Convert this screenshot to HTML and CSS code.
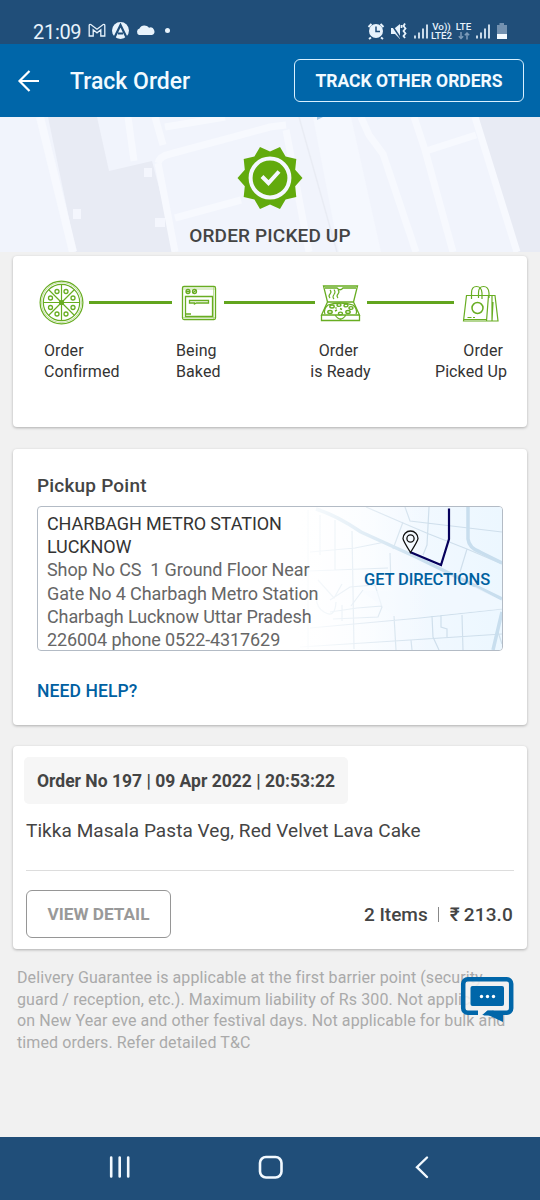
FILE: index.html
```html
<!DOCTYPE html>
<html lang="en">
<head>
<meta charset="utf-8">
<title>Track Order</title>
<link rel="stylesheet" href="styles.css">
</head>
<body>
<div class="screen">
  <div class="status">
    <span class="clock">21:09</span>
    <svg class="status-left" viewBox="86 18 90 24" width="90" height="24" fill="none" stroke="#e8f3fc">
      <path d="M89.200 36V25.500q0-1.500 1.600-1l6.200 4.800 6.200-4.800q1.600-.5 1.600 1V36h-4v-6.200l-3.800 3-3.800-3V36z" stroke-width="1.300"/>
      <circle cx="120.500" cy="30.500" r="8.500" fill="#e8f3fc" stroke="none"/>
      <path d="M114 38.500l6.500-13.500 6.500 13.500M118 33.500h5" stroke="#204e79" stroke-width="2.200"/>
      <path d="M139 35a3.500 3.500 0 0 1 .5-6.500a5.500 5.500 0 0 1 9.500-.7a3.700 3.700 0 0 1 3 7.200z" fill="#e8f3fc" stroke="none"/>
      <circle cx="167.500" cy="30.500" r="2.500" fill="#e8f3fc" stroke="none"/>
    </svg>
    <svg class="status-icons" viewBox="366 20 64 22" width="64" height="22" fill="none" stroke="#e8f3fc">
      <circle cx="376" cy="31" r="7" fill="#e8f3fc" stroke="none"/>
      <path d="M376 26.500V31.500h4" stroke="#204e79" stroke-width="1.500"/>
      <path d="M368.500 27l3-3M383.500 27l-3-3M371 37.500l-2 1.500M381 37.500l2 1.500" stroke-width="2"/>
      <path d="M391 28h4l5-4v15l-5-5h-4z" fill="#e8f3fc" stroke="none"/>
      <path d="M390.500 23l10 15" stroke="#204e79" stroke-width="1.500"/>
      <path d="M401.500 25v3M405 23.500l-1.500 2.500 2 2.500-2 2.500 2 2.500-2 2.500 1.500 2" stroke-width="1.800"/>
      <path d="M415 38.500v-3M419 38.500v-6M423 38.500v-10M427 38.500v-14" stroke-width="1.700"/>
    </svg>
    <span class="volte"><b>Vo))</b><b>LTE2</b></span>
    <span class="lte"><b>LTE</b><svg viewBox="0 0 12 8" width="12" height="8" fill="none" stroke="#7d9bb9" stroke-width="1.500"><path d="M3 0v6.500M.8 4.300L3 6.500l2.200-2.200M9 7.500V1M6.800 3.200L9 1l2.200 2.200"/></svg></span>
    <svg class="status-right" viewBox="474 20 36 22" width="36" height="22" fill="none" stroke="#e8f3fc">
      <path d="M477 38.500v-3M481 38.500v-6M485 38.500v-10M489 38.500v-14" stroke-width="1.700"/>
      <path d="M497 25h2.500v-2h4.500v2h3v14h-10z" fill="#7391b0" stroke="none"/>
      <path d="M497 34h10v5h-10z" fill="#f4faff" stroke="none"/>
    </svg>
  </div>

  <header class="appbar">
    <svg class="back" viewBox="16 68 26 26" width="26" height="26" fill="none" stroke="#fff" stroke-width="2.200"><path d="M39 81H19.500M29.500 71L19.500 81l10 10"/></svg>
    <h1 class="title">Track Order</h1>
    <button class="other">TRACK OTHER ORDERS</button>
  </header>

  <section class="hero">
    <svg class="hero-map" viewBox="0 117 540 135" width="540" height="135" fill="none" stroke="#f7f9fe">
      <path d="M48 117h49l12 54 43-10 24 91H76z" fill="#e8ebf4" stroke="none"/>
      <path d="M478 117h62v135h-22z" fill="#e8ebf4" stroke="none"/>
      <path d="M313 117h38l30 135h-42z" fill="#f5f8fe" stroke="none"/>
      <path d="M40 117l33 135" stroke-width="8"/>
      <path d="M128 117l6 44M155 117l8 28M158 163l17 89M158 163q2-7 12-9l100-27 16-2M175 218l66-18M165 127l60-10" stroke-width="7"/>
      <path d="M286 130l23 122M361 117l8 18 14 19 33 98M414 117l11 33 28 102M426 151l50-16M475 117l42 135" stroke-width="7"/>
      <path d="M299 117l38 135" stroke="#e9ecf4" stroke-width="1.500"/>
      <path d="M144 168h8v9h-8zM73 209h8v10h-8zM155 218h10v9h-10z" fill="#f4f6fd" stroke="none"/>
      <path d="M317 117h6l-6 3z" fill="#a9cae6" stroke="none"/>
    </svg>
    <svg class="seal" viewBox="-33 -33 66 66" width="66" height="66">
      <path fill="#62aa0d" d="M32.500 0L25.200 8.200 26.300 19.100 15.600 21.400 10 30.900 0 26.500-10 30.900-15.600 21.400-26.300 19.100-25.200 8.200-32.500 0-25.200-8.200-26.300-19.100-15.600-21.400-10-30.900 0-26.500 10-30.900 15.600-21.400 26.300-19.100 25.200-8.200z"/>
      <circle r="19.400" fill="none" stroke="#f5f8ff" stroke-width="4"/>
      <path d="M-8-1.500l6.500 6.500L9-6.500" fill="none" stroke="#f5f8ff" stroke-width="4"/>
    </svg>
    <p class="state">ORDER PICKED UP</p>
  </section>

  <section class="card progress">
    <div class="track">
      <svg viewBox="39 280 45 45" width="45" height="45" fill="none" stroke="#68ad22" stroke-width="1.200">
        <circle cx="61.500" cy="302.500" r="21.400"/><circle cx="61.500" cy="302.500" r="18.200"/><circle cx="61.500" cy="302.500" r="20" stroke="#a7d17a" stroke-width=".7"/>
        <path d="M61.500 284v37M43 302.500h37M48.500 289.500l26 26M74.500 289.500l-26 26"/>
        <circle cx="61.500" cy="302.500" r="2" fill="#68ad22"/>
        <g stroke-width="1.300"><circle cx="57" cy="291.500" r="2"/><circle cx="66" cy="291.500" r="2"/><circle cx="50.500" cy="298" r="2"/><circle cx="73" cy="298" r="2"/><circle cx="50.500" cy="307.500" r="2"/><circle cx="73" cy="307.500" r="2"/><circle cx="57" cy="314" r="2"/><circle cx="66" cy="314" r="2"/></g>
      </svg>
      <i class="bar bar-1"></i>
      <svg viewBox="181 284 36 36" width="36" height="36" fill="none" stroke="#68ad22" stroke-width="1.300">
        <rect x="182.500" y="285.500" width="33" height="33" rx="1.500"/><path d="M183 288h32M213.500 286v32M183 316.500h32" stroke="#a7d17a" stroke-width=".7"/>
        <path d="M185.500 295.500h27v20h-27z"/><path d="M189.500 299.500h19v2.500h-12l-2 1v-1h-5zM186 313h5"/>
        <circle cx="188" cy="290.500" r="2"/><circle cx="194.500" cy="290.500" r="2"/><path d="M186 290.500h4M192.500 292l4-3"/>
      </svg>
      <i class="bar bar-2"></i>
      <svg viewBox="320 283 41 38" width="41" height="38" fill="none" stroke="#68ad22" stroke-width="1.300">
        <path d="M323.500 285h34l-4 16h-26zM325 287h12q3 3.500 6 0h13M327.500 301l-6 13h38l-6-13M321.500 314v5.500h38V314M335 314q5.500 8 11 0"/>
        <path d="M325 313q-2-5 3-9 12-4 25 0 5 4 3 9"/>
        <path d="M330 297q-2-2 0-4t0-4M334 298q-2-2 0-4.500t0-5M338 297q-2-2 0-4t0-4" stroke-width="1.100"/>
        <g stroke-width="1.400"><ellipse cx="332" cy="305.500" rx="2.200" ry="1.500"/><ellipse cx="339" cy="304" rx="2" ry="1.400"/><ellipse cx="346" cy="304.500" rx="2" ry="1.400"/><ellipse cx="351" cy="307" rx="2" ry="1.400"/><ellipse cx="330" cy="311" rx="2.200" ry="1.500"/><ellipse cx="348" cy="311" rx="2.200" ry="1.500"/><ellipse cx="340.500" cy="312.500" rx="2" ry="1.400"/><path d="M335 310l2-1M340 307.500l2 1M335.500 306.500l1 1"/></g>
      </svg>
      <i class="bar bar-3"></i>
      <svg viewBox="462 282 38 38" width="38" height="38" fill="none" stroke="#68ad22" stroke-width="1.200">
        <path d="M466.500 293.500h28.500l3 25.500h-34.500zM488.500 293.500l-2 25.500M492 293.500v25.500M493 300l-1 19M464 317.500h22"/>
        <path d="M471.500 297v-6q0-6.500 5-6.500t5.500 6.500v6M478.500 296v-5q0-6.500 5-6.500t5.500 6.500v5"/>
        <circle cx="477.500" cy="306" r="5.500" stroke-width="1.500"/><path d="M467.500 315.500h4M473 315.500h2"/>
      </svg>
    </div>
    <div class="labels">
      <p class="l1"><span>Order</span><br><span>Confirmed</span></p>
      <p class="l2">Being<br>Baked</p>
      <p class="l3"><span class="nudge">Order</span><br>is Ready</p>
      <p class="l4"><span class="inset">Order</span><br>Picked Up</p>
    </div>
  </section>

  <section class="card pickup">
    <h2 class="subhead">Pickup Point</h2>
    <div class="place">
      <svg class="map" viewBox="298 507 204 143" width="204" height="143" fill="none">
        <defs>
          <linearGradient id="sky" x1="0" x2="1"><stop offset="0" stop-color="#fff"/><stop offset=".5" stop-color="#f3f9ff"/><stop offset="1" stop-color="#ecf7ff"/></linearGradient>
          <linearGradient id="fade" x1="0" x2="1"><stop offset="0" stop-color="#fff" stop-opacity=".95"/><stop offset=".65" stop-color="#fff" stop-opacity="0"/></linearGradient>
        </defs>
        <path d="M298 507h204v143H298z" fill="url(#sky)"/>
        <g stroke="#cfdfec" stroke-width="1.200">
          <path d="M366 507l37 16 26 11 38 15 35 15M403 522l-10 27M405 507l5 14 92 11M429 507l-2 38-4 10M467 549l-7 23M352 531l2 118M310 552l45-4 30-6M308 571l80-3M390 553l1 33M335 520v50M320 515v40M308 510v139"/>
          <path d="M310 628l110-10 82-9M300 647l110-7 92-6M394 616l2 34M432 616l1 21 6 13M462 615l1 35M441 615v12l6 2v8M411 640l1 10M498 632l4 12M330 612l27-4 25-2M330 600l20-13 25-2 7 22-4 10-45 2M342 605v16M363 590l-12 16M318 580l16 18 8-14M318 590q-5 15 6 22t12-10"/>
        </g>
        <path d="M316 509q20 6 45 23l55 25 86 42M468 507v32q1 9 12 13l22 11M502 612l-9 38" stroke="#c8deee" stroke-width="3.500"/>
        <path d="M362 591h30l6-4h78l26 14v8l-103 10z" fill="#f1f8ff" opacity=".6"/>
        <path d="M298 507h204v143H298z" fill="url(#fade)"/>
        <path d="M410 552l31 13 8-26V508.500" stroke="#06005c" stroke-width="2.200"/>
        <path d="M410.500 552.500q-7.500-12-7.500-14a7.500 7.500 0 1 1 15 0q0 2-7.500 14z" stroke="#111" stroke-width="1.300"/>
        <circle cx="410.500" cy="538.500" r="3.600" stroke="#111" stroke-width="1.300"/>
      </svg>
      <div class="address"><p class="store">CHARBAGH METRO STATION<br>LUCKNOW</p><p class="street">Shop No CS&nbsp; 1 Ground Floor Near<br>Gate No 4 Charbagh Metro Station<br>Charbagh Lucknow Uttar Pradesh<br>226004 phone 0522-4317629</p></div>
      <a class="directions">GET DIRECTIONS</a>
    </div>
    <a class="help">NEED HELP?</a>
  </section>

  <section class="card order">
    <div class="order-no"><span>Order No 197 | 09 Apr 2022 | 20:53:22</span></div>
    <p class="items">Tikka Masala Pasta Veg, Red Velvet Lava Cake</p>
    <div class="summary">
      <button class="detail">VIEW DETAIL</button>
      <span class="count">2 Items</span>
      <i class="divider"></i>
      <span class="price"><span class="rupee">₹</span>213.0</span>
    </div>
  </section>

  <div class="note">
    <p><span>Delivery Guarantee is applicable at the first barrier point (security</span><br><span>guard / reception, etc.). Maximum liability of Rs 300. Not applicable</span><br><span>on New Year eve and other festival days. Not applicable for bulk and</span><br><span>timed orders. Refer detailed T&amp;C</span></p>
    <svg class="chat" viewBox="459 976 56 47" width="56" height="47">
      <path d="M489 1012h20l-6 3v7l-17-8z" fill="#0066a9"/>
      <rect x="463.200" y="979.200" width="48" height="33.500" rx="4.500" fill="#f1f1f1" fill-opacity=".85" stroke="#0066a9" stroke-width="4.500"/>
      <path d="M478 1005v13.500l9.500-8h5V1005z" fill="#f1f1f1"/>
      <path d="M487.500 1010.500h6v5h-10z" fill="#0066a9"/>
      <rect x="470.500" y="986" width="33.500" height="20" rx="2" fill="#0066a9"/>
      <g fill="#fff"><circle cx="481.500" cy="996.500" r="1.700"/><circle cx="487.500" cy="996.500" r="1.700"/><circle cx="493.500" cy="996.500" r="1.700"/></g>
    </svg>
  </div>

  <nav class="nav">
    <svg viewBox="107 1154 26 26" width="26" height="26" stroke="#f2f9ff" stroke-width="2.600" stroke-linecap="round"><path d="M111.200 1157.500v19M119.700 1157.500v19M128.200 1157.500v19"/></svg>
    <svg viewBox="258 1154 26 26" width="26" height="26" fill="none" stroke="#f2f9ff" stroke-width="2.600"><rect x="260" y="1157" width="21.500" height="20.500" rx="6"/></svg>
    <svg viewBox="409 1154 26 26" width="26" height="26" fill="none" stroke="#f2f9ff" stroke-width="2.400" stroke-linecap="round"><path d="M427 1157.500l-10 9.700 10 9.800"/></svg>
  </nav>
</div>
</body>
</html>
```
FILE: styles.css
```css
* { box-sizing: border-box; margin: 0; padding: 0; }
body { font-family: Roboto, "Liberation Sans", sans-serif; background: #f1f1f1; color: #444; }
svg { display: block; flex: none; }
p, span, a, h1, h2, button { white-space: nowrap; }
button { font-family: inherit; background: none; }
.screen { width: 540px; height: 1200px; display: flex; flex-direction: column; overflow: hidden; }

.status { height: 44px; flex: none; background: #204e79; display: flex; padding: 0 30px 0 33px; color: #e8f3fc; }
.clock { font-size: 20px; line-height: 24px; padding-top: 20px; width: 53px; letter-spacing: -.3px; }
.status-left { margin-top: 18px; }
.status-icons { margin-top: 20px; margin-left: 190px; }
.volte, .lte { display: flex; flex-direction: column; font-size: 9.800px; }
.volte b, .lte b { font-weight: 500; line-height: 9px; }
.volte { width: 23px; padding-top: 22px; align-items: center; }
.lte { width: 21px; padding-top: 22px; align-items: center; gap: 1px; }
.status-right { margin-top: 20px; }

.appbar { height: 73px; flex: none; background: #0066a9; color: #f2faff; display: flex; align-items: center; padding: 0 16px; }
.title { font-size: 23px; font-weight: 500; margin-left: 28px; line-height: 28px; padding-top: 3px; }
.other { margin-left: auto; width: 230px; height: 43px; border: 1.500px solid #d8f0ff; border-radius: 6px; color: #f2faff; font-size: 17.500px; font-weight: 700; }

.hero { position: relative; height: 135px; flex: none; background: #f1f4fc; display: flex; flex-direction: column; align-items: center; padding-top: 28px; }
.hero-map { position: absolute; inset: 0; }
.seal, .state { position: relative; }
.state { margin-top: 13px; font-size: 19px; line-height: 24px; font-weight: 500; letter-spacing: .15px; }

.card { margin: 0 13px; background: #fff; border-radius: 4px; box-shadow: 0 1px 3px rgba(0,0,0,.28); flex: none; }
.progress { margin-top: 4px; height: 171px; padding: 24px 0 0 26px; color: #333; }
.track { display: flex; align-items: center; height: 45px; }
.bar { height: 3px; background: #62a51e; flex: none; }
.bar-1 { width: 83px; margin: 0 9px 0 5px; }
.bar-2 { width: 91px; margin: 0 5px 0 7px; }
.bar-3 { width: 87px; margin: 0 8px 0 6px; }
.labels { display: flex; margin-top: 15px; font-size: 16px; line-height: 21px; letter-spacing: .1px; }
.l1 { width: 132px; margin-left: 5px; }
.l2 { width: 134px; }
.l3 { width: 61px; text-align: center; }
.nudge { margin-right: 4px; }
.l4 { width: 136px; text-align: right; }
.inset { margin-right: 4px; }

.pickup { margin-top: 22px; height: 276px; padding: 25px 24px 0; display: flex; flex-direction: column; }
.subhead { font-size: 19px; line-height: 24px; font-weight: 500; letter-spacing: .2px; }
.place { margin-top: 8px; width: 466px; height: 145px; border: 1px solid #b3bbc5; border-radius: 4px; position: relative; overflow: hidden; }
.map { position: absolute; right: 0; top: 0; }
.address { position: relative; padding: 5px 0 0 9px; font-size: 18px; line-height: 23.200px; letter-spacing: -.1px; }
.store { color: #333; }
.street { color: #666; }
.directions { position: absolute; right: 12px; top: 62px; font-size: 16.500px; line-height: 22px; font-weight: 500; letter-spacing: -.15px; color: #00619f; }
.help { margin-top: 29px; font-size: 17.500px; line-height: 22px; font-weight: 500; letter-spacing: .1px; color: #0060a2; }

.order { margin-top: 21px; height: 203px; padding: 11px 13px 0; }
.order-no { width: 324px; height: 47px; margin-left: -2px; border-radius: 5px; background: #f6f6f6; padding-left: 13px; display: flex; align-items: center; font-size: 17.500px; font-weight: 700; }
.items { font-size: 19px; line-height: 24px; letter-spacing: .07px; margin-top: 15px; height: 52px; border-bottom: 1.500px solid #ddd; }
.summary { display: flex; align-items: center; margin-top: 19px; height: 48px; font-size: 19px; font-weight: 500; }
.detail { width: 145px; height: 48px; border: 1.500px solid #969696; border-radius: 6px; color: #999; font-size: 17.200px; font-weight: 700; margin-right: auto; }
.divider { width: 1px; height: 15px; background: #888; margin: 0 11px 0 10px; }
.price { line-height: 24px; padding-top: 2px; padding-right: 1px; letter-spacing: .15px; }
.rupee { margin-right: 4px; }

.note { position: relative; margin-top: 18px; padding-left: 17px; height: 170px; flex: none; font-size: 16px; line-height: 21.500px; letter-spacing: .1px; color: #aaa; }
.chat { position: absolute; left: 459px; top: 9px; }

.nav { height: 63px; flex: none; background: #204e79; display: flex; gap: 125px; padding: 17px 0 0 107px; }
```
